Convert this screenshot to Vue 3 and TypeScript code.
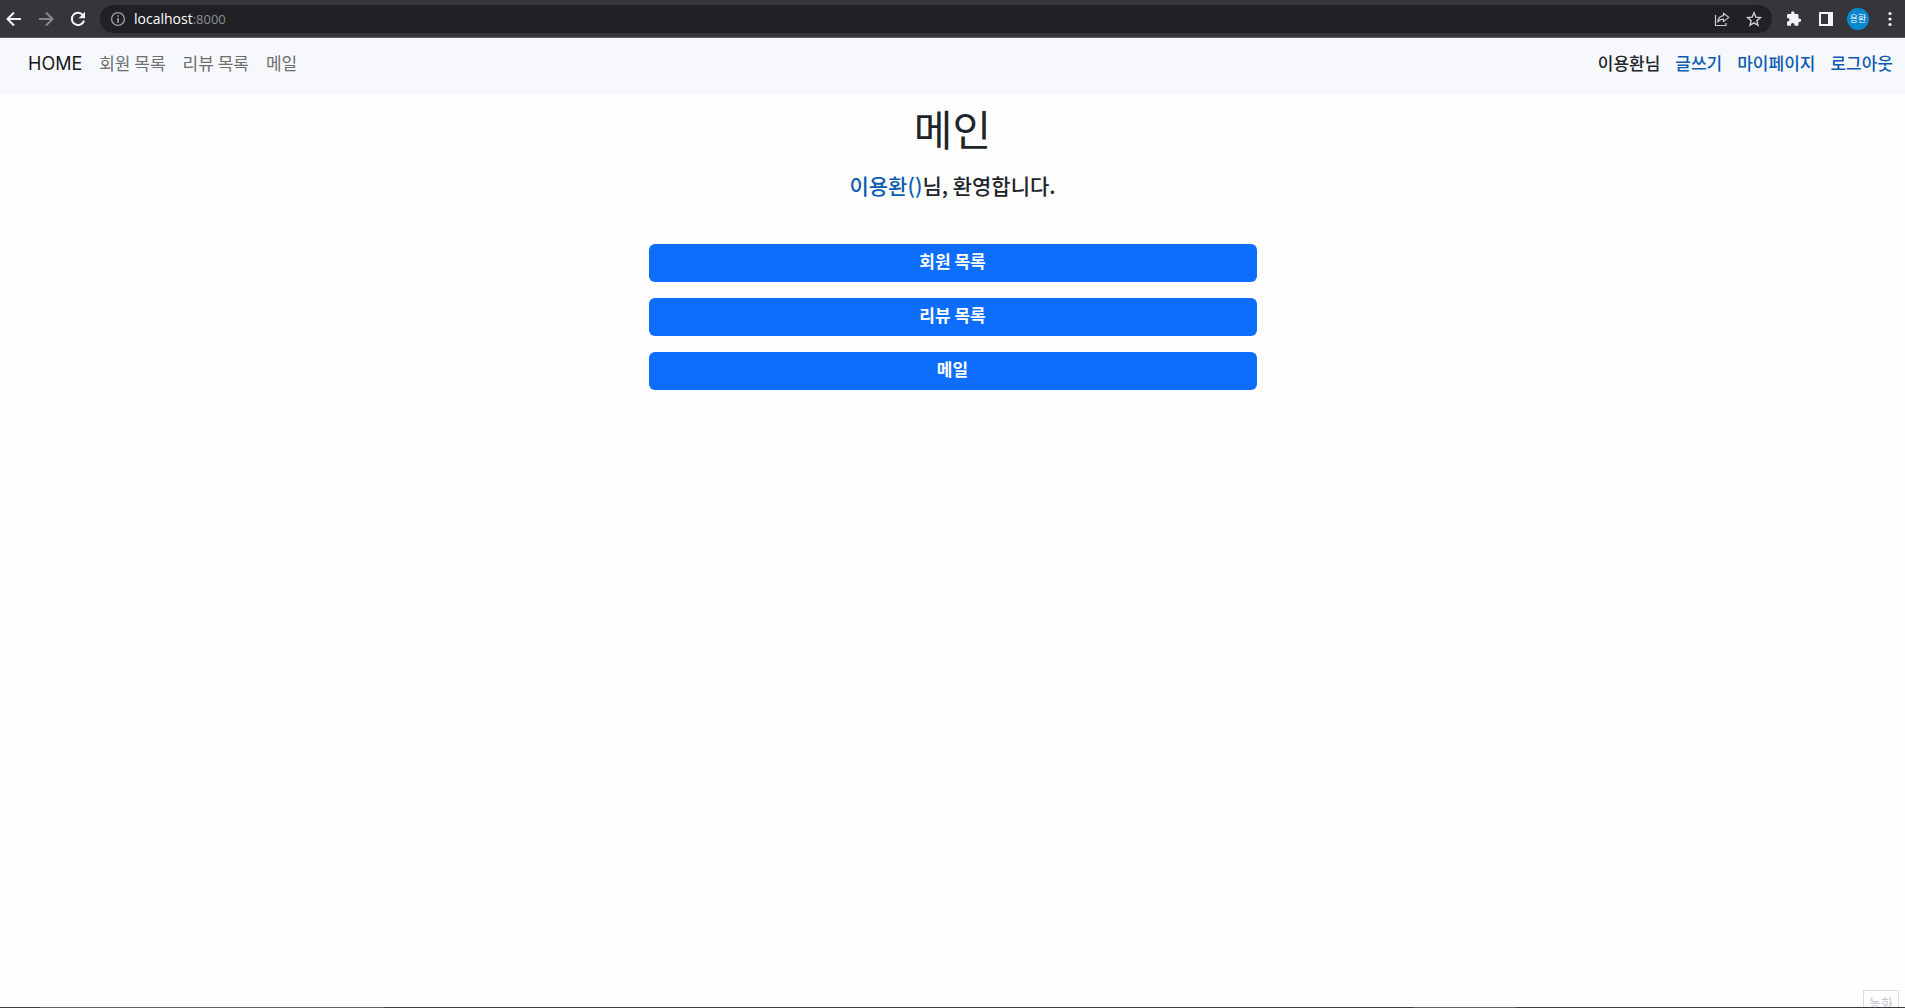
<script setup lang="ts">
interface NavLink {
  label: string
  href: string
}

const pages: NavLink[] = [
  { label: '회원 목록', href: '#members' },
  { label: '리뷰 목록', href: '#reviews' },
  { label: '메일', href: '#mail' },
]

const account: NavLink[] = [
  { label: '글쓰기', href: '#write' },
  { label: '마이페이지', href: '#mypage' },
  { label: '로그아웃', href: '#logout' },
]

const userName = '이용환'
</script>

<template>
  <div class="window">
    <header class="toolbar">
      <div class="controls">
        <button class="icon" type="button" aria-label="뒤로">
          <svg width="16" height="16" viewBox="0 0 16 16"><path d="M15 8H2M8 1.5 1.5 8 8 14.5" class="stroke" /></svg>
        </button>
        <button class="icon dim" type="button" aria-label="앞으로">
          <svg width="16" height="16" viewBox="0 0 16 16"><path d="M1 8h13M8 1.5 14.5 8 8 14.5" class="stroke" /></svg>
        </button>
        <button class="icon" type="button" aria-label="새로고침">
          <svg width="16" height="16" viewBox="0 0 16 16"><path d="M13.2 4.4A6.2 6.2 0 1 0 14 9.6" class="stroke" /><path d="M15 .8v6.4H8.6z" fill="currentColor" /></svg>
        </button>
      </div>
      <div class="address">
        <svg class="info" width="16" height="16" viewBox="0 0 16 16"><circle cx="8" cy="8" r="6.4" fill="none" stroke="currentColor" stroke-width="1.3" /><path d="M7.2 4.2h1.7v1.6H7.2zM7.2 7h1.7v4.8H7.2z" fill="currentColor" /></svg>
        <span class="url">localhost<span class="port">:8000</span></span>
        <button class="icon soft" type="button" aria-label="공유">
          <svg width="16" height="16" viewBox="0 0 16 16"><path d="M1.5 4v10.5H12V12" fill="none" stroke="currentColor" stroke-width="1.2" /><path d="M9.5 2.2 14.8 6.4 9.5 10.6V8.2C7 8.2 5 9 3.7 11 4 7.500 6 5 9.5 4.6z" fill="none" stroke="currentColor" stroke-width="1.2" stroke-linejoin="round" /></svg>
        </button>
        <button class="icon soft" type="button" aria-label="북마크">
          <svg width="16" height="16" viewBox="0 0 16 16"><path d="m8 1.8 1.8 4.3 4.7.4-3.6 3.1 1.1 4.6L8 11.8l-4 2.400 1.100-4.600L1.500 6.500l4.700-.4z" fill="none" stroke="currentColor" stroke-width="1.4" /></svg>
        </button>
      </div>
      <div class="extras">
        <button class="icon" type="button" aria-label="확장 프로그램">
          <svg width="16" height="16" viewBox="0 0 16 16"><path fill="currentColor" d="M13.5 7.5h-1V4.3c0-.7-.6-1.3-1.3-1.3H8.5V2a1.7 1.7 0 0 0-3.4 0v1H2.3C1.6 3 1 3.6 1 4.3v2.6h1a1.9 1.9 0 0 1 0 3.7H1v2.9c0 .7.6 1.3 1.3 1.3h2.6v-1a1.8 1.8 0 0 1 3.6 0v1h2.7c.7 0 1.3-.6 1.3-1.3v-2.600h1a1.700 1.700 0 0 0 0-3.400z" /></svg>
        </button>
        <button class="icon" type="button" aria-label="사이드 패널">
          <svg width="16" height="16" viewBox="0 0 16 16"><path fill="currentColor" fill-rule="evenodd" d="M1 1h14v14H1zM3 3v10h7V3z" /></svg>
        </button>
        <button class="avatar" type="button">용환</button>
        <button class="icon" type="button" aria-label="메뉴">
          <svg width="16" height="16" viewBox="0 0 16 16" fill="currentColor"><circle cx="8" cy="2.5" r="1.6" /><circle cx="8" cy="8" r="1.6" /><circle cx="8" cy="13.5" r="1.6" /></svg>
        </button>
      </div>
    </header>

    <nav class="navbar">
      <div class="links">
        <a class="home" href="#home">HOME</a>
        <a v-for="page in pages" :key="page.href" class="page" :href="page.href">{{ page.label }}</a>
      </div>
      <div class="links account">
        <span>{{ userName }}님</span>
        <a v-for="item in account" :key="item.href" :href="item.href">{{ item.label }}</a>
      </div>
    </nav>

    <main class="main">
      <h1>메인</h1>
      <p class="welcome"><a href="#mypage">{{ userName }}()</a>님, 환영합니다.</p>
      <div class="actions">
        <button v-for="page in pages" :key="page.href" type="button">{{ page.label }}</button>
      </div>
    </main>

    <footer class="edge">
      <span class="edge-wide"></span>
      <span class="edge-short"></span>
    </footer>
    <div class="ime">농화</div>
  </div>
</template>

<style>
body {
  background: #fefefe;
}
</style>

<style scoped>
.window {
  position: relative;
  display: flex;
  flex-direction: column;
  height: 100vh;
  overflow: hidden;
  color: #212529;
  font-family: "Noto Sans CJK KR", sans-serif;
  font-size: 17px;
  line-height: 24px;
}

button {
  padding: 0;
  border: 0;
  background: none;
  color: inherit;
  font: inherit;
}

a {
  color: #0d5caf;
  text-decoration: none;
}

svg {
  display: block;
}

.stroke {
  fill: none;
  stroke: currentColor;
  stroke-width: 2;
}

.toolbar {
  display: flex;
  align-items: center;
  height: 38px;
  box-sizing: border-box;
  border-bottom: 1px solid #5b5c5f;
  background: #35363a;
  color: #f1f3f4;
}

.controls {
  display: flex;
  gap: 16px;
  padding: 0 14px 0 6px;
}

.dim {
  color: #85878a;
}

.address {
  display: flex;
  flex: 1;
  align-items: center;
  gap: 16px;
  height: 28px;
  padding: 0 10px;
  border-radius: 14px;
  background: #202124;
}

.info {
  color: #9aa0a6;
}

.url {
  flex: 1;
  margin-left: -8px;
  color: #fff;
  font-family: "Open Sans", sans-serif;
  font-size: 14px;
  line-height: 20px;
}

.port {
  color: #8b8f94;
  font-size: 13px;
}

.soft {
  color: #c8cad0;
}

.extras {
  display: flex;
  align-items: center;
  gap: 16px;
  padding: 0 7px 0 14px;
}

.avatar {
  width: 22px;
  height: 22px;
  margin: 0 -3px;
  border-radius: 50%;
  background: #0b87d2;
  font-size: 9px;
  line-height: 20px;
  white-space: nowrap;
}

.navbar {
  display: flex;
  flex-wrap: wrap;
  justify-content: space-between;
  padding: 13px 12px 19px 28px;
  background: #f7f8fb;
}

.links {
  display: flex;
  gap: 17px;
}

.page {
  color: #6c6e70;
}

.home {
  color: #16181a;
  font-family: Inter, sans-serif;
  font-size: 18px;
  line-height: 26px;
}

.account {
  gap: 15px;
  font-weight: 500;
}

.navbar .links {
  height: 24px;
}

.main {
  display: flex;
  flex: 1;
  flex-direction: column;
  align-items: center;
  padding-top: 10px;
}

h1 {
  margin: 0;
  font-size: 42px;
  font-weight: 400;
  line-height: 48px;
}

.welcome {
  margin: 17px 0 43px;
  font-size: 21px;
  font-weight: 500;
  line-height: 32px;
}

.actions {
  display: grid;
  gap: 16px;
  width: 32%;
  max-width: 608px;
}

.actions button {
  height: 38px;
  padding-bottom: 5px;
  border-radius: 6px;
  background: #0d6efd;
  color: #fff;
  font-weight: 700;
}

.edge {
  display: flex;
  justify-content: space-between;
  height: 1px;
  padding: 0 389px 0 40px;
  background: #3a3a3c;
}

.edge-wide,
.edge-short {
  width: 344px;
  background: #5f5f60;
}

.edge-short {
  width: 103px;
}

.ime {
  position: absolute;
  right: 6px;
  bottom: 1px;
  width: 36px;
  height: 17px;
  box-sizing: border-box;
  overflow: hidden;
  border: 1px solid #dcdde0;
  border-bottom: 0;
  color: #c4c6cc;
  font-size: 13px;
  line-height: 24px;
  text-align: center;
}
</style>
